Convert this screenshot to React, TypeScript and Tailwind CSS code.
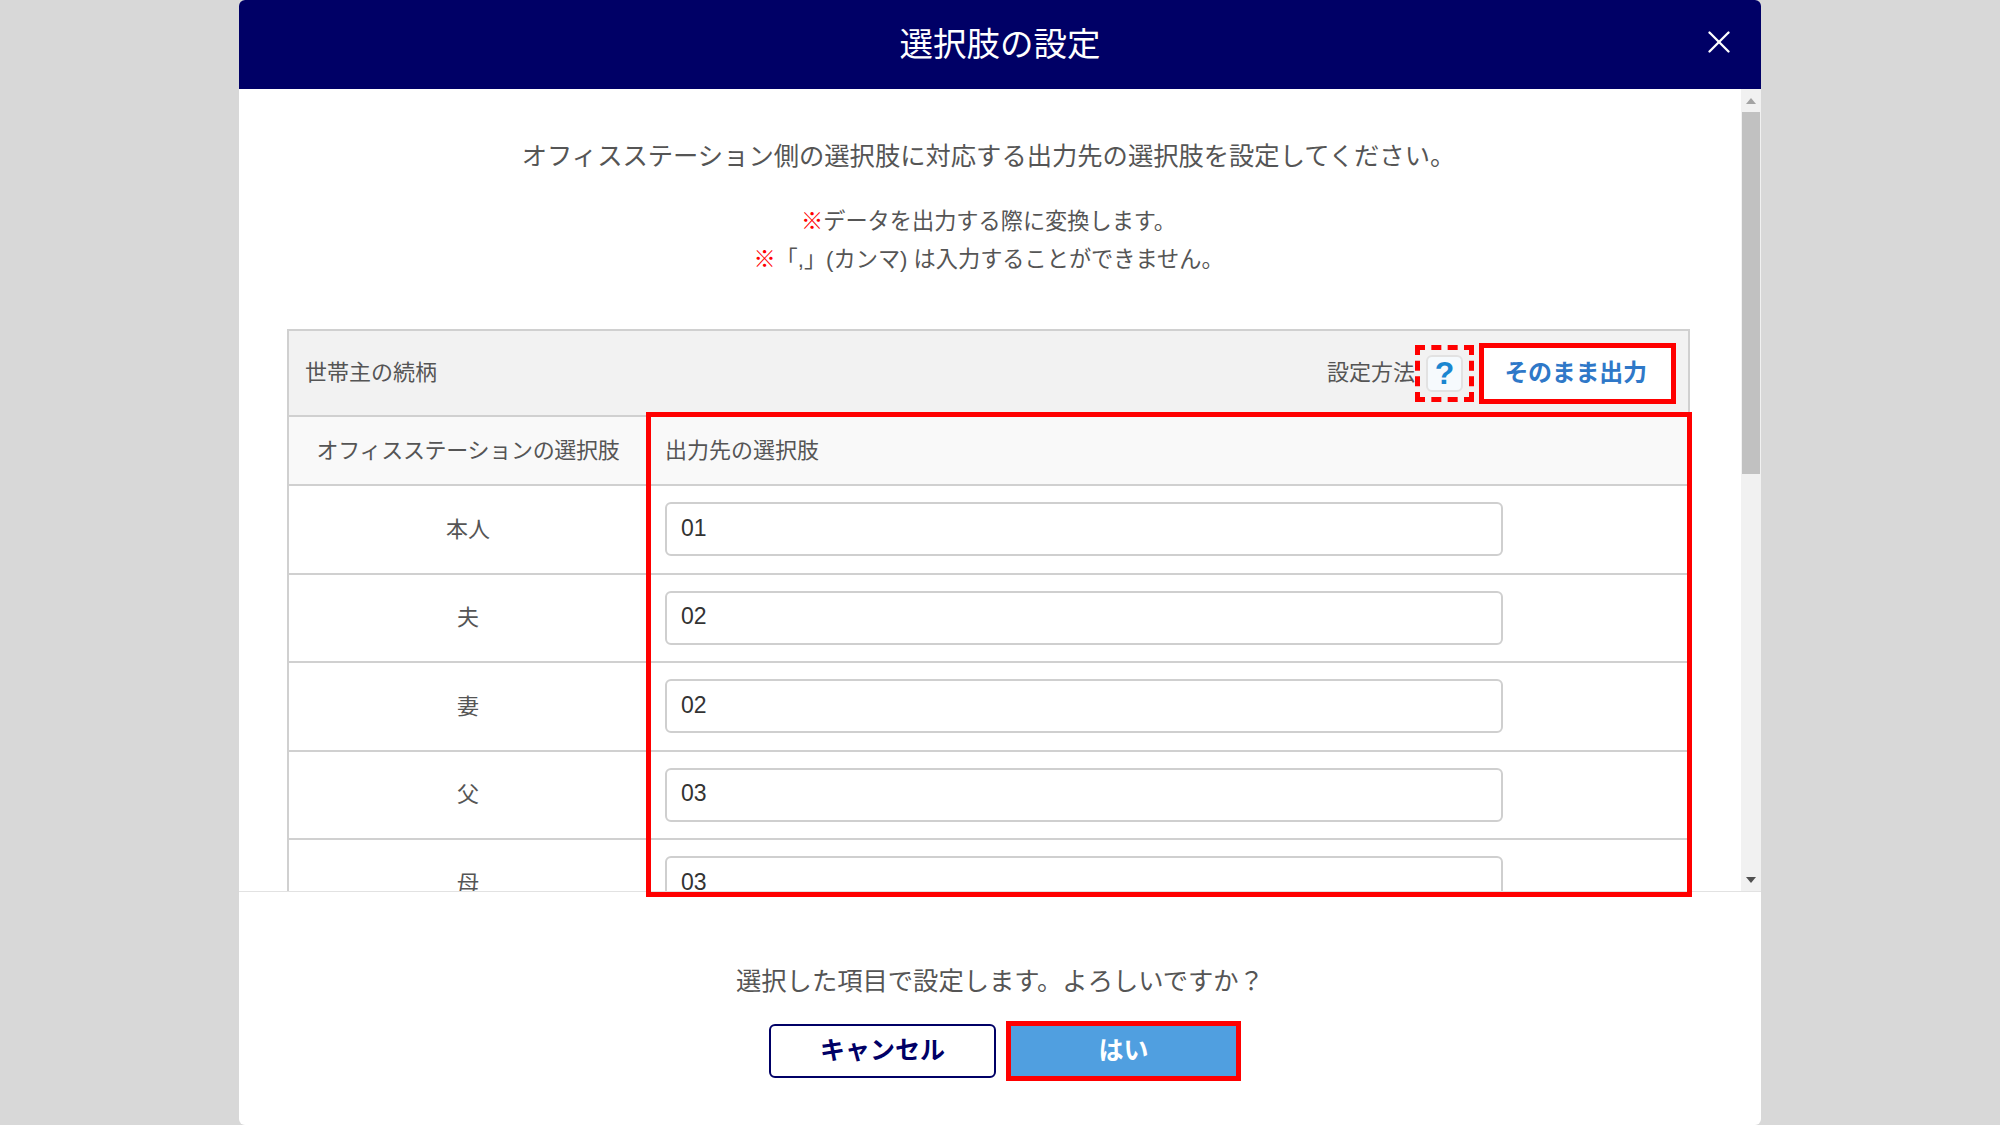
import { X } from 'lucide-react';

const rows = [
  { label: '本人', value: '01' },
  { label: '夫', value: '02' },
  { label: '妻', value: '02' },
  { label: '父', value: '03' },
  { label: '母', value: '03' },
];

function Scrollbar() {
  return (
    <div className="w-5 shrink-0 flex flex-col items-center bg-[#f1f1f1] pb-1">
      <div className="h-[23px] flex items-center justify-center">
        <div className="w-0 h-0 border-x-[5px] border-x-transparent border-b-[6px] border-b-[#a3a3a3]" />
      </div>
      <div className="w-[18px] h-[362px] bg-[#c1c1c1]" />
      <div className="flex-1" />
      <div className="h-[15px] flex items-center justify-center">
        <div className="w-0 h-0 border-x-[5px] border-x-transparent border-t-[6px] border-t-[#505050]" />
      </div>
    </div>
  );
}

export default function App() {
  return (
    <div className="h-[1125px] overflow-hidden bg-[#d8d8d8] font-['Liberation_Sans','Noto_Sans_CJK_JP',sans-serif] text-[#555555]">
      <div className="relative mx-auto w-[1522px] h-[1125px] flex flex-col bg-white rounded-md overflow-hidden">
        <header className="relative h-[89px] shrink-0 bg-[#000066] flex items-center justify-center">
          <h1 className="text-[33.5px] text-white font-normal pt-[2px]">選択肢の設定</h1>
          <button className="absolute right-[23px] top-[23px] text-white">
            <X className="w-[38px] h-[38px]" strokeWidth={1.5} />
          </button>
        </header>

        <div className="h-[803px] shrink-0 flex border-b border-[#e2e2e2]">
          <div className="flex-1 overflow-hidden pl-[48px] pr-[51px] pt-[47px]">
            <p className="text-center text-[25.3px] leading-[40px]">
              オフィスステーション側の選択肢に対応する出力先の選択肢を設定してください。
            </p>
            <div className="mt-[27px] text-center text-[22.2px] leading-[38px]">
              <p><span className="text-[#ff0000] font-bold">※</span>データを出力する際に変換します。</p>
              <p><span className="text-[#ff0000] font-bold">※</span>「,」(カンマ) は入力することができません。</p>
            </div>

            <div className="mt-[50px] border-x-2 border-t-2 border-[#d0d0d0] text-[22px]">
              <div className="h-[86px] flex items-center justify-between bg-[#f2f2f2] border-b-2 border-[#d0d0d0] pl-4 pr-[12px]">
                <span className="pb-[2px]">世帯主の続柄</span>
                <div className="flex items-center">
                  <span className="pb-[2px]">設定方法</span>
                  <div className="w-[59px] h-[57px] border-[5px] border-dashed border-[#ff0000] flex items-center justify-center">
                    <button className="w-[37px] h-[37px] rounded-[6px] border-2 border-[#e2e2e2] bg-[#f6fafd] text-[#1a86d0] font-bold text-[32px] leading-none font-['Liberation_Sans',sans-serif]">
                      ?
                    </button>
                  </div>
                  <button className="ml-[5px] w-[197px] h-[61px] border-[5px] border-[#ff0000] bg-white pr-[4px] text-[#2f78c8] font-bold text-[24px] tracking-[-0.3px]">
                    そのまま出力
                  </button>
                </div>
              </div>

              <div className="h-[69px] flex bg-[#f9f9f9] border-b-2 border-[#d0d0d0]">
                <div className="w-[358px] flex items-center justify-center tracking-[-0.3px]">オフィスステーションの選択肢</div>
                <div className="flex-1 flex items-center pl-[18px]">出力先の選択肢</div>
              </div>

              {rows.map((row) => (
                <div key={row.label} className="h-[88.5px] flex border-b-2 border-[#d0d0d0]">
                  <div className="w-[358px] flex items-center justify-center">{row.label}</div>
                  <div className="flex-1 flex items-center pl-[18px]">
                    <input
                      readOnly
                      value={row.value}
                      className="w-[838px] h-[54px] rounded-[6px] border-2 border-[#cfcfcf] px-[14px] pb-[2px] text-[23px] text-[#333333] font-['Liberation_Sans',sans-serif]"
                    />
                  </div>
                </div>
              ))}
            </div>
          </div>
          <Scrollbar />
        </div>

        <footer className="flex-1 flex flex-col items-center pt-[69px]">
          <p className="text-[25.3px] leading-[40px]">選択した項目で設定します。よろしいですか？</p>
          <div className="mt-[20px] pl-[10px] flex items-center">
            <button className="w-[227px] h-[54px] rounded-[6px] border-2 border-[#000066] bg-white text-[#000066] font-bold text-[25px]">
              キャンセル
            </button>
            <button className="ml-[10px] w-[235px] h-[60px] border-[5px] border-[#ff0000] bg-[#509fe0] text-white font-bold text-[25px]">
              はい
            </button>
          </div>
        </footer>

        {/* red annotation over the output column */}
        <div className="absolute left-[407px] top-[412px] w-[1046px] h-[485px] border-[5px] border-[#ff0000] pointer-events-none" />
      </div>
    </div>
  );
}
